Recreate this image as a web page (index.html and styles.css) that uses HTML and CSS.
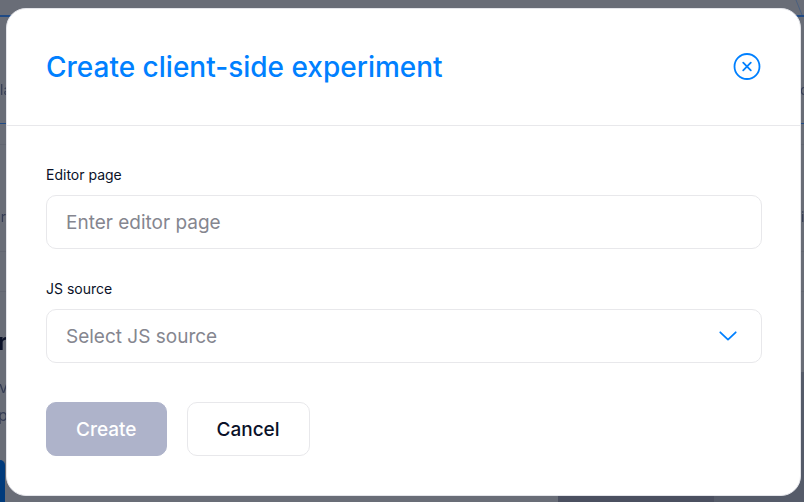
FILE: index.html
```html
<!DOCTYPE html>
<html lang="en">
<head>
<meta charset="utf-8">
<meta name="viewport" content="width=device-width, initial-scale=1">
<title>Create client-side experiment</title>
<link rel="stylesheet" href="styles.css">
</head>
<body>
<div class="backdrop" aria-hidden="true">
  <div class="rule rule-blue rule-top"></div>
  <div class="rule rule-blue rule-tabs"></div>
  <div class="rule rule-a"></div>
  <div class="rule rule-b"></div>
  <div class="rule rule-c"></div>
  <svg class="spark" viewBox="0 0 10 16"><path d="M2 0 L8 15" fill="none" stroke="#4a6080"/></svg>
  <span class="peek peek-la">la</span>
  <span class="peek peek-or">or</span>
  <span class="peek peek-r">r</span>
  <span class="peek peek-v">v</span>
  <span class="peek peek-p">p</span>
  <span class="peek peek-c">c</span>
  <span class="peek peek-i">i</span>
  <div class="peek-button"></div>
  <div class="panel-side"></div>
  <div class="panel-dark"></div>
</div>
<main class="modal" role="dialog" aria-labelledby="title">
  <header class="modal-header">
    <h1 id="title">Create client-side experiment</h1>
    <button class="close" type="button" aria-label="Close">
      <svg viewBox="0 0 28 28" fill="none" stroke="currentColor" stroke-linecap="round">
        <circle cx="14" cy="13.5" r="12.5" stroke-width="1.8"/>
        <path d="M10.2 9.7l7.6 7.6M17.8 9.7l-7.6 7.6" stroke-width="1.8"/>
      </svg>
    </button>
  </header>
  <form class="modal-body">
    <div class="field">
      <label for="page">Editor page</label>
      <input id="page" class="control" type="text" placeholder="Enter editor page">
    </div>
    <div class="field">
      <label for="source">JS source</label>
      <div class="select">
        <select id="source" class="control"><option>Select JS source</option></select>
        <svg class="chevron" viewBox="0 0 18 10" fill="none" stroke="currentColor" stroke-width="1.8" stroke-linecap="round" stroke-linejoin="round"><path d="M1.3 1.3L9 8.6L16.7 1.3"/></svg>
      </div>
    </div>
    <div class="actions">
      <button class="button button-primary" type="submit" disabled>Create</button>
      <button class="button" type="button">Cancel</button>
    </div>
  </form>
</main>
</body>
</html>
```
FILE: styles.css
```css
* { box-sizing: border-box; }
body {
  margin: 0;
  padding: 8px 3px 6px 6px;
  background: #696d77;
  color: #0a1128;
  font-family: Inter, "Liberation Sans", sans-serif;
}
button, input, select { font: inherit; }

.backdrop { position: fixed; inset: 0; overflow: hidden; }
.rule { position: absolute; left: 0; right: 0; height: 1px; background: #626671; }
.rule-blue { background: #204a84; }
.rule-top { top: 15px; height: 2px; }
.rule-tabs { top: 123px; }
.rule-a { top: 144px; }
.rule-b { top: 251px; }
.rule-c { top: 291px; }
.spark { position: absolute; top: 0; right: 0; width: 10px; height: 16px; }
.peek { position: absolute; color: #343c54; font-size: 14px; line-height: 20px; }
.peek-la { left: 0; top: 80px; }
.peek-or { right: calc(100% - 6px); top: 207px; }
.peek-r { left: -2px; top: 332px; color: #0a1128; font-size: 24px; font-weight: 600; }
.peek-v { left: -1px; top: 377px; font-size: 16px; }
.peek-p { left: -2px; top: 405px; font-size: 16px; }
.peek-c { left: calc(100% - 4px); top: 80px; }
.peek-i { left: calc(100% - 3px); top: 207px; }
.peek-button { position: absolute; left: 0; top: 460px; bottom: 0; width: 5px; border-radius: 0 6px 0 0; background: #003b7c; }
.panel-side { position: absolute; left: calc(100% - 90px); right: 0; top: 372px; bottom: 0; background: #555b69; }
.panel-dark { position: absolute; right: 90px; bottom: 0; width: 156px; height: 20px; background: #4b5060; }

.modal { position: relative; border: 1px solid #e4e5ea; border-radius: 20px; background: #fff; }
.modal-header {
  display: flex;
  align-items: center;
  justify-content: space-between;
  padding: 38px 39px;
  border-bottom: 1px solid #e8e8eb;
}
h1 { margin: 0; color: #0080ff; font-size: 28px; font-weight: 500; line-height: 40px; }
.close { width: 28px; height: 28px; padding: 0; border: 0; background: none; color: #0080ff; }
.close svg { display: block; }

.modal-body { padding: 39px 38px 39px 39px; }
.field { margin-bottom: 30px; }
label { display: block; margin-bottom: 10px; font-size: 14px; line-height: 20px; }
.control {
  display: block;
  width: 100%;
  height: 54px;
  padding: 0 19px;
  border: 1px solid #e8e8eb;
  border-radius: 10px;
  background: #fff;
  color: #85868f;
  font-size: 19px;
  appearance: none;
}
.control::placeholder { color: #85868f; opacity: 1; }
.select { position: relative; }
.chevron { position: absolute; right: 25px; top: 22px; width: 18px; height: 10px; color: #0080ff; pointer-events: none; }

.actions { display: flex; gap: 20px; margin-top: 39px; }
.button {
  height: 54px;
  padding: 0 29px;
  border: 1px solid #e8e8eb;
  border-radius: 10px;
  background: #fff;
  color: #0a1128;
  font-size: 19px;
  font-weight: 500;
}
.button-primary { border-color: #aeb3ca; background: #aeb3ca; color: #fff; }
```
